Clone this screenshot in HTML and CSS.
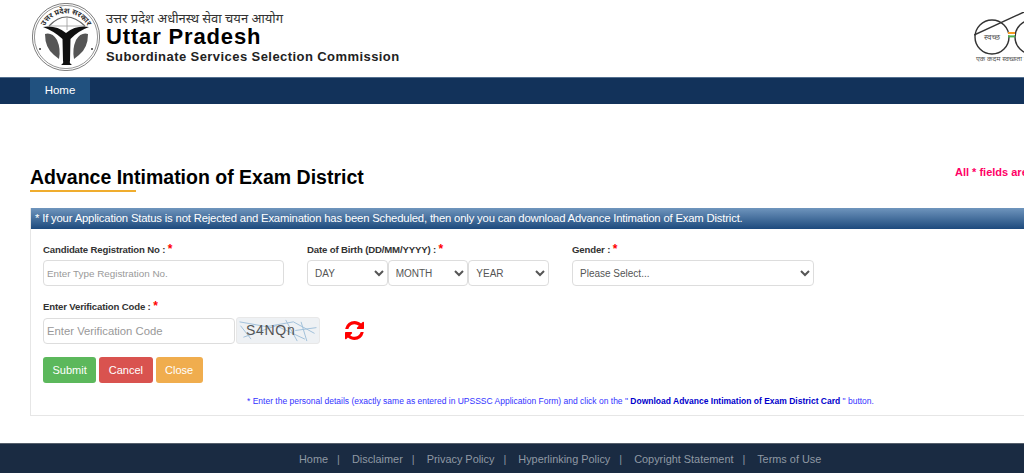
FILE: index.html
```html
<!DOCTYPE html>
<html lang="en">
<head>
    <meta charset="UTF-8">
    <meta name="viewport" content="width=device-width, initial-scale=1.0">
    <title>Advance Intimation of Exam District</title>
    <link rel="stylesheet" href="styles.css">
</head>
<body>

    <div class="page">
        <header class="header">
            <div class="brand">
                <svg class="emblem" viewBox="0 0 68 68">
                    <circle cx="34" cy="34" r="33.6" fill="#fff" stroke="#444" stroke-width="0.7"/>
                    <circle cx="34" cy="34" r="31.6" fill="none" stroke="#666" stroke-width="0.7"/>
                    <path id="emblem-arc" d="M12.3 44.5 A24 24 0 1 1 55.7 44.5" fill="none"/>
                    <text class="emblem-word"><textPath href="#emblem-arc" startOffset="50%">उत्तर प्रदेश सरकार</textPath></text>
                    <path d="M17 23 Q34 5 53 23" fill="none" stroke="#666" stroke-width="1.2"/>
                    <path d="M17 23 H53 M35 13 V27" fill="none" stroke="#999" stroke-width="0.8"/>
                    <path d="M11 24 Q24 22 34 30 Q44 22 57 24 Q46 28 38.5 36 L38 58 Q37 60 40 62 H29 Q32 60 31 58 L30.5 36 Q22 28 11 24Z" fill="#111"/>
                    <path class="emblem-fish" d="M13 31 Q20 29 25 37 Q29 46 27 56 L22 52 Q13 45 13 31Z"/>
                    <path class="emblem-fish" d="M56 31 Q49 29 44 37 Q40 46 42 56 L47 52 Q56 45 56 31Z"/>
                    <circle cx="8" cy="46" r="1" fill="#333"/>
                    <circle cx="60" cy="46" r="1" fill="#333"/>
                </svg>
                <div class="brand-text">
                    <div class="brand-hindi">उत्तर प्रदेश अधीनस्थ सेवा चयन आयोग</div>
                    <div class="brand-title">Uttar Pradesh</div>
                    <div class="brand-sub">Subordinate Services Selection Commission</div>
                </div>
            </div>
            <div class="swachh">
                <svg class="glasses" viewBox="0 0 80 44">
                    <circle cx="18" cy="25" r="17" fill="none" stroke="#333" stroke-width="1.4"/>
                    <circle cx="58" cy="25" r="17" fill="none" stroke="#333" stroke-width="1.4"/>
                    <path d="M0 23 L50 0" fill="none" stroke="#333" stroke-width="1.4"/>
                    <rect x="34" y="20" width="7" height="2" fill="#f59a23"/>
                    <rect x="34" y="22" width="7" height="1.4" fill="#fff"/>
                    <rect x="34" y="23.4" width="7" height="2" fill="#4caf50"/>
                    <text x="18" y="28" class="glasses-word">स्वच्छ</text>
                    <text x="58" y="28" class="glasses-word">भारत</text>
                </svg>
                <div class="swachh-line">एक कदम स्वच्छता की ओर</div>
            </div>
        </header>

        <nav class="nav">
            <a class="nav-item" href="#">Home</a>
        </nav>

        <main class="content">
            <div class="title-row">
                <h1 class="title">Advance Intimation of Exam District</h1>
                <div class="required-note">All * fields are mandatory</div>
            </div>

            <div class="panel">
                <div class="panel-head">* If your Application Status is not Rejected and Examination has been Scheduled, then only you can download Advance Intimation of Exam District.</div>
                <div class="panel-body">
                    <div class="form-row">
                        <div class="field field-reg">
                            <label class="label">Candidate Registration No : <span class="star">*</span></label>
                            <input class="control" type="text" placeholder="Enter Type Registration No.">
                        </div>
                        <div class="field field-dob">
                            <label class="label">Date of Birth (DD/MM/YYYY) : <span class="star">*</span></label>
                            <div class="dob">
                                <select class="control"><option>DAY</option></select>
                                <select class="control"><option>MONTH</option></select>
                                <select class="control"><option>YEAR</option></select>
                            </div>
                        </div>
                        <div class="field field-gender">
                            <label class="label">Gender : <span class="star">*</span></label>
                            <select class="control"><option>Please Select...</option></select>
                        </div>
                    </div>

                    <div class="field">
                        <label class="label">Enter Verification Code : <span class="star">*</span></label>
                        <div class="captcha-row">
                            <input class="control control-code" type="text" placeholder="Enter Verification Code">
                            <div class="captcha">
                                <svg class="captcha-noise" viewBox="0 0 84 26">
                                    <path d="M2 4 L30 9 L58 4 L80 16 M6 20 L40 8 L70 22 M50 2 L62 24 M66 4 L72 24 M60 13 L82 10 M3 8 L14 22" fill="none" stroke="#9fc0da" stroke-width="1"/>
                                </svg>
                                <span class="captcha-text">S4NQn</span>
                            </div>
                            <svg class="refresh" viewBox="128 128 1536 1536">
                                <path d="M1639 1056q0 5-1 7-64 268-268 434.5t-478 166.5q-146 0-282.5-55t-243.5-157l-129 129q-19 19-45 19t-45-19-19-45v-448q0-26 19-45t45-19h448q26 0 45 19t19 45-19 45l-137 137q71 66 161 102t187 36q134 0 250-65t186-179q11-17 53-117 8-23 30-23h192q13 0 22.5 9.5t9.5 22.5zm25-800v448q0 26-19 45t-45 19h-448q-26 0-45-19t-19-45 19-45l138-138q-148-137-349-137-134 0-250 65t-186 179q-11 17-53 117-8 23-30 23h-199q-13 0-22.5-9.5t-9.5-22.5v-7q65-268 270-434.5t480-166.5q146 0 284 55.5t245 156.5l130-129q19-19 45-19t45 19 19 45z" fill="#f00"/>
                            </svg>
                        </div>
                    </div>

                    <div class="actions">
                        <button class="btn btn-green">Submit</button>
                        <button class="btn btn-red">Cancel</button>
                        <button class="btn btn-orange">Close</button>
                    </div>

                    <p class="hint">* Enter the personal details (exactly same as entered in UPSSSC Application Form) and click on the " <b>Download Advance Intimation of Exam District Card</b> " button.</p>
                </div>
            </div>
        </main>

        <footer class="footer">
            <a href="#">Home</a><span class="sep">|</span>
            <a href="#">Disclaimer</a><span class="sep">|</span>
            <a href="#">Privacy Policy</a><span class="sep">|</span>
            <a href="#">Hyperlinking Policy</a><span class="sep">|</span>
            <a href="#">Copyright Statement</a><span class="sep">|</span>
            <a href="#">Terms of Use</a>
        </footer>
    </div>

</body>
</html>
```

FILE: styles.css
```css
html, body {
    margin: 0;
    overflow: hidden;
}

body {
    font-family: "Liberation Sans", Arial, sans-serif;
    background-color: white;
}

.page {
    width: 1140px;
}

.header {
    display: flex;
    justify-content: space-between;
    height: 77px;
    padding: 0 30px;
}

.brand {
    display: flex;
    gap: 6px;
}

.emblem {
    width: 68px;
    height: 68px;
    margin: 3px 0 0 2px;
}

.emblem-word {
    font-family: "Noto Sans", sans-serif;
    font-size: 7.5px;
    font-weight: bold;
    fill: #333;
    text-anchor: middle;
}

.emblem-fish {
    fill: #555;
}

.brand-text {
    padding-top: 9px;
}

.brand-hindi {
    font-family: "Noto Sans", "Noto Serif Devanagari", "Noto Sans CJK SC", sans-serif;
    font-size: 13px;
    line-height: 18px;
    color: #333;
}

.brand-title {
    font-size: 22px;
    font-weight: bold;
    line-height: 20px;
    letter-spacing: 0.85px;
    color: black;
}

.brand-sub {
    font-size: 13px;
    font-weight: bold;
    line-height: 17px;
    letter-spacing: 0.43px;
    color: #222;
    margin-top: 1px;
}

.swachh {
    position: absolute;
    left: 974px;
    top: 12px;
    width: 84px;
}

.glasses {
    display: block;
    width: 80px;
    height: 44px;
}

.glasses-word {
    font-family: "Noto Sans", sans-serif;
    font-size: 8px;
    fill: #555;
    text-anchor: middle;
}

.swachh-line {
    font-family: "Noto Sans", sans-serif;
    font-size: 7px;
    line-height: 10px;
    color: #555;
    white-space: nowrap;
    margin: -2px 0 0 2px;
}

.nav {
    display: flex;
    height: 26px;
    padding: 0 30px;
    background-color: #12325a;
    border-top: 1px solid #54708f;
}

.nav-item {
    width: 60px;
    line-height: 25px;
    text-align: center;
    font-size: 11.5px;
    color: white;
    text-decoration: none;
    background-color: #21517f;
}

.content {
    padding: 60px 30px 27px;
}

.title-row {
    display: flex;
    justify-content: space-between;
    height: 44px;
}

.title {
    margin: 0;
    height: 27px;
    font-size: 19.5px;
    line-height: 27px;
    font-weight: bold;
    color: black;
    position: relative;
}

.title::after {
    content: "";
    position: absolute;
    left: 0;
    bottom: -1px;
    width: 106px;
    height: 2px;
    background-color: #f0ad2e;
}

.required-note {
    font-size: 11px;
    font-weight: bold;
    color: #ff0066;
    padding-top: 2px;
    position: absolute;
    left: 955px;
    white-space: nowrap;
}

.panel {
    border: 1px solid #e6e6e6;
    border-top: none;
}

.panel-head {
    height: 21px;
    padding-left: 4px;
    line-height: 21px;
    font-size: 11.3px;
    letter-spacing: -0.18px;
    color: white;
    white-space: nowrap;
    background: linear-gradient(#6f95bd, #1d4a7d);
}

.panel-body {
    padding: 12px 12px 7px;
}

.form-row {
    display: flex;
    margin-bottom: 12px;
}

.field-reg {
    width: 241px;
    margin-right: 23px;
}

.field-dob {
    width: 242px;
    margin-right: 23px;
}

.field-gender {
    width: 242px;
}

.label {
    display: block;
    height: 19px;
    font-size: 9.6px;
    letter-spacing: -0.15px;
    line-height: 16px;
    font-weight: bold;
    color: #333;
}

.star {
    color: red;
    font-size: 12px;
}

.control {
    display: block;
    box-sizing: border-box;
    width: 100%;
    height: 26px;
    padding: 0 3px;
    font-family: "Liberation Sans", Arial, sans-serif;
    font-size: 10px;
    color: #555;
    background-color: white;
    border: 1px solid #ddd;
    border-radius: 4px;
}

input.control {
    font-size: 9.85px;
}

.control::placeholder {
    color: #999;
    opacity: 1;
}

.dob {
    display: flex;
}

.dob .control {
    width: 81px;
}

.captcha-row {
    display: flex;
    align-items: center;
}

input.control-code {
    width: 192px;
    font-size: 11.3px;
}

.captcha {
    position: relative;
    box-sizing: border-box;
    width: 84px;
    height: 27px;
    margin-left: 1px;
    padding-left: 9px;
    background-color: #eef1f4;
    border: 1px solid #e8e8e8;
    border-radius: 3px;
}

.captcha-noise {
    position: absolute;
    left: 0;
    top: 0;
    width: 100%;
    height: 100%;
}

.captcha-text {
    position: relative;
    font-size: 14px;
    line-height: 25px;
    letter-spacing: 0.7px;
    color: #555;
}

.refresh {
    width: 19px;
    height: 19px;
    margin-left: 25px;
}

.actions {
    display: flex;
    gap: 3px;
    margin-top: 13px;
}

.btn {
    height: 26px;
    padding: 0 9.5px;
    font-family: "Liberation Sans", Arial, sans-serif;
    font-size: 11px;
    color: white;
    border: none;
    border-radius: 3px;
}

.btn-green {
    background-color: #5cb85c;
}

.btn-red {
    background-color: #d9534f;
}

.btn-orange {
    background-color: #f0ad4e;
}

.hint {
    margin: 11px 0 0 204px;
    font-size: 8.5px;
    line-height: 14px;
    color: #3333ff;
    white-space: nowrap;
}

.hint b {
    color: #0000cc;
}

.footer {
    height: 31px;
    padding-left: 299px;
    line-height: 30px;
    font-size: 10.9px;
    color: #8a949f;
    background-color: #1a2b42;
    border-top: 1px solid #555f6b;
}

.footer a {
    color: #8f99a4;
    text-decoration: none;
}

.sep {
    margin: 0 9px;
}
```
